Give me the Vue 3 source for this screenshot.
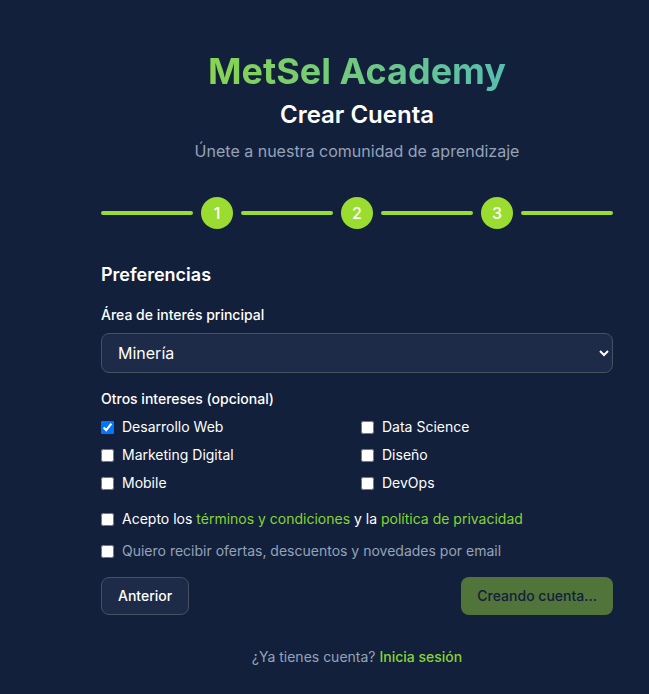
<script setup>
import { ref } from 'vue'

const steps = [1, 2, 3]
const area = ref('Minería')
const areas = ['Minería', 'Tecnología', 'Diseño', 'Negocios']
const interests = ['Desarrollo Web', 'Data Science', 'Marketing Digital', 'Diseño', 'Mobile', 'DevOps']
const selected = ref(['Desarrollo Web'])
const terms = ref(false)
const offers = ref(false)
</script>

<template>
  <main class="page">
    <header class="intro">
      <h1 class="brand">MetSel Academy</h1>
      <h2 class="title">Crear Cuenta</h2>
      <p class="subtitle">Únete a nuestra comunidad de aprendizaje</p>
    </header>

    <div class="progress">
      <span class="bar"></span>
      <template v-for="step in steps" :key="step">
        <span class="step">{{ step }}</span>
        <span class="bar"></span>
      </template>
    </div>

    <form class="form" @submit.prevent>
      <h3 class="heading">Preferencias</h3>

      <div class="field">
        <label class="label" for="area">Área de interés principal</label>
        <select id="area" v-model="area" class="select">
          <option v-for="item in areas" :key="item">{{ item }}</option>
        </select>
      </div>

      <fieldset class="field group">
        <legend class="label">Otros intereses (opcional)</legend>
        <div class="options">
          <label v-for="item in interests" :key="item" class="check">
            <input v-model="selected" type="checkbox" :value="item" />
            <span>{{ item }}</span>
          </label>
        </div>
      </fieldset>

      <div class="consents">
        <label class="check">
          <input v-model="terms" type="checkbox" />
          <span>Acepto los <a class="link" href="#terminos">términos y condiciones</a> y la <a class="link" href="#privacidad">política de privacidad</a></span>
        </label>
        <label class="check muted">
          <input v-model="offers" type="checkbox" />
          <span>Quiero recibir ofertas, descuentos y novedades por email</span>
        </label>
      </div>

      <div class="actions">
        <button type="button" class="button secondary">Anterior</button>
        <button type="submit" class="button primary" disabled>Creando cuenta...</button>
      </div>
    </form>

    <p class="login">¿Ya tienes cuenta? <a class="link strong" href="#login">Inicia sesión</a></p>
  </main>
</template>

<style>
body {
  margin: 0;
  background: #13203c;
}
</style>

<style scoped>
.page {
  box-sizing: border-box;
  padding: 51px 36px 24px 101px;
  color: #fff;
  font-family: Inter, "Liberation Sans", sans-serif;
  font-size: 14px;
  line-height: 20px;
}
h1, h2, h3, p {
  margin: 0;
}
.intro {
  display: flex;
  flex-direction: column;
  margin-bottom: 34px;
  text-align: center;
}
.brand {
  margin-bottom: 8px;
  font-size: 36px;
  line-height: 40px;
  font-weight: 700;
  color: transparent;
  background: linear-gradient(90deg, #9adc30, #46b5d1);
  -webkit-background-clip: text;
  background-clip: text;
}
.title {
  margin-bottom: 8px;
  font-size: 24px;
  line-height: 32px;
  font-weight: 600;
}
.subtitle {
  font-size: 16px;
  line-height: 24px;
  color: #94a3b8;
}
.progress {
  display: flex;
  align-items: center;
  gap: 8px;
  margin-bottom: 32px;
}
.bar {
  flex: 1;
  height: 4px;
  border-radius: 2px;
  background: #9adc30;
}
.step {
  display: flex;
  align-items: center;
  justify-content: center;
  width: 32px;
  height: 32px;
  border-radius: 50%;
  background: #9adc30;
  font-size: 16px;
  font-weight: 500;
}
.form {
  display: flex;
  flex-direction: column;
  gap: 16px;
}
.heading {
  font-size: 18px;
  line-height: 28px;
  font-weight: 600;
}
.field {
  display: flex;
  flex-direction: column;
}
.group {
  display: block;
  min-width: 0;
  margin: 0;
  padding: 0;
  border: 0;
}
.label {
  padding: 0;
  margin-bottom: 8px;
  font-weight: 500;
}
.select {
  width: 100%;
  height: 40px;
  padding: 0 0 0 12px;
  border: 1px solid #475160;
  border-radius: 8px;
  background: #1d2a48;
  color: #fff;
  font-family: inherit;
  font-size: 16px;
}
.options {
  display: grid;
  grid-template-columns: 1fr 1fr;
  gap: 8px;
}
.check {
  display: flex;
  align-items: center;
  gap: 8px;
}
.check input {
  flex: none;
  width: 13px;
  height: 13px;
  margin: 0;
}
.muted {
  color: #94a3b8;
}
.consents {
  display: flex;
  flex-direction: column;
  gap: 12px;
}
.link {
  color: #84d630;
  text-decoration: none;
}
.strong {
  font-weight: 500;
}
.actions {
  display: flex;
  justify-content: space-between;
}
.button {
  padding: 8px 16px;
  border: 0;
  border-radius: 8px;
  font-family: inherit;
  font-size: 14px;
  line-height: 20px;
  font-weight: 500;
}
.secondary {
  border: 1px solid #475160;
  background: #1d2a48;
  color: #fff;
}
.primary {
  background: #51743a;
  color: #13203c;
}
.login {
  margin-top: 32px;
  text-align: center;
  color: #94a3b8;
}
</style>
